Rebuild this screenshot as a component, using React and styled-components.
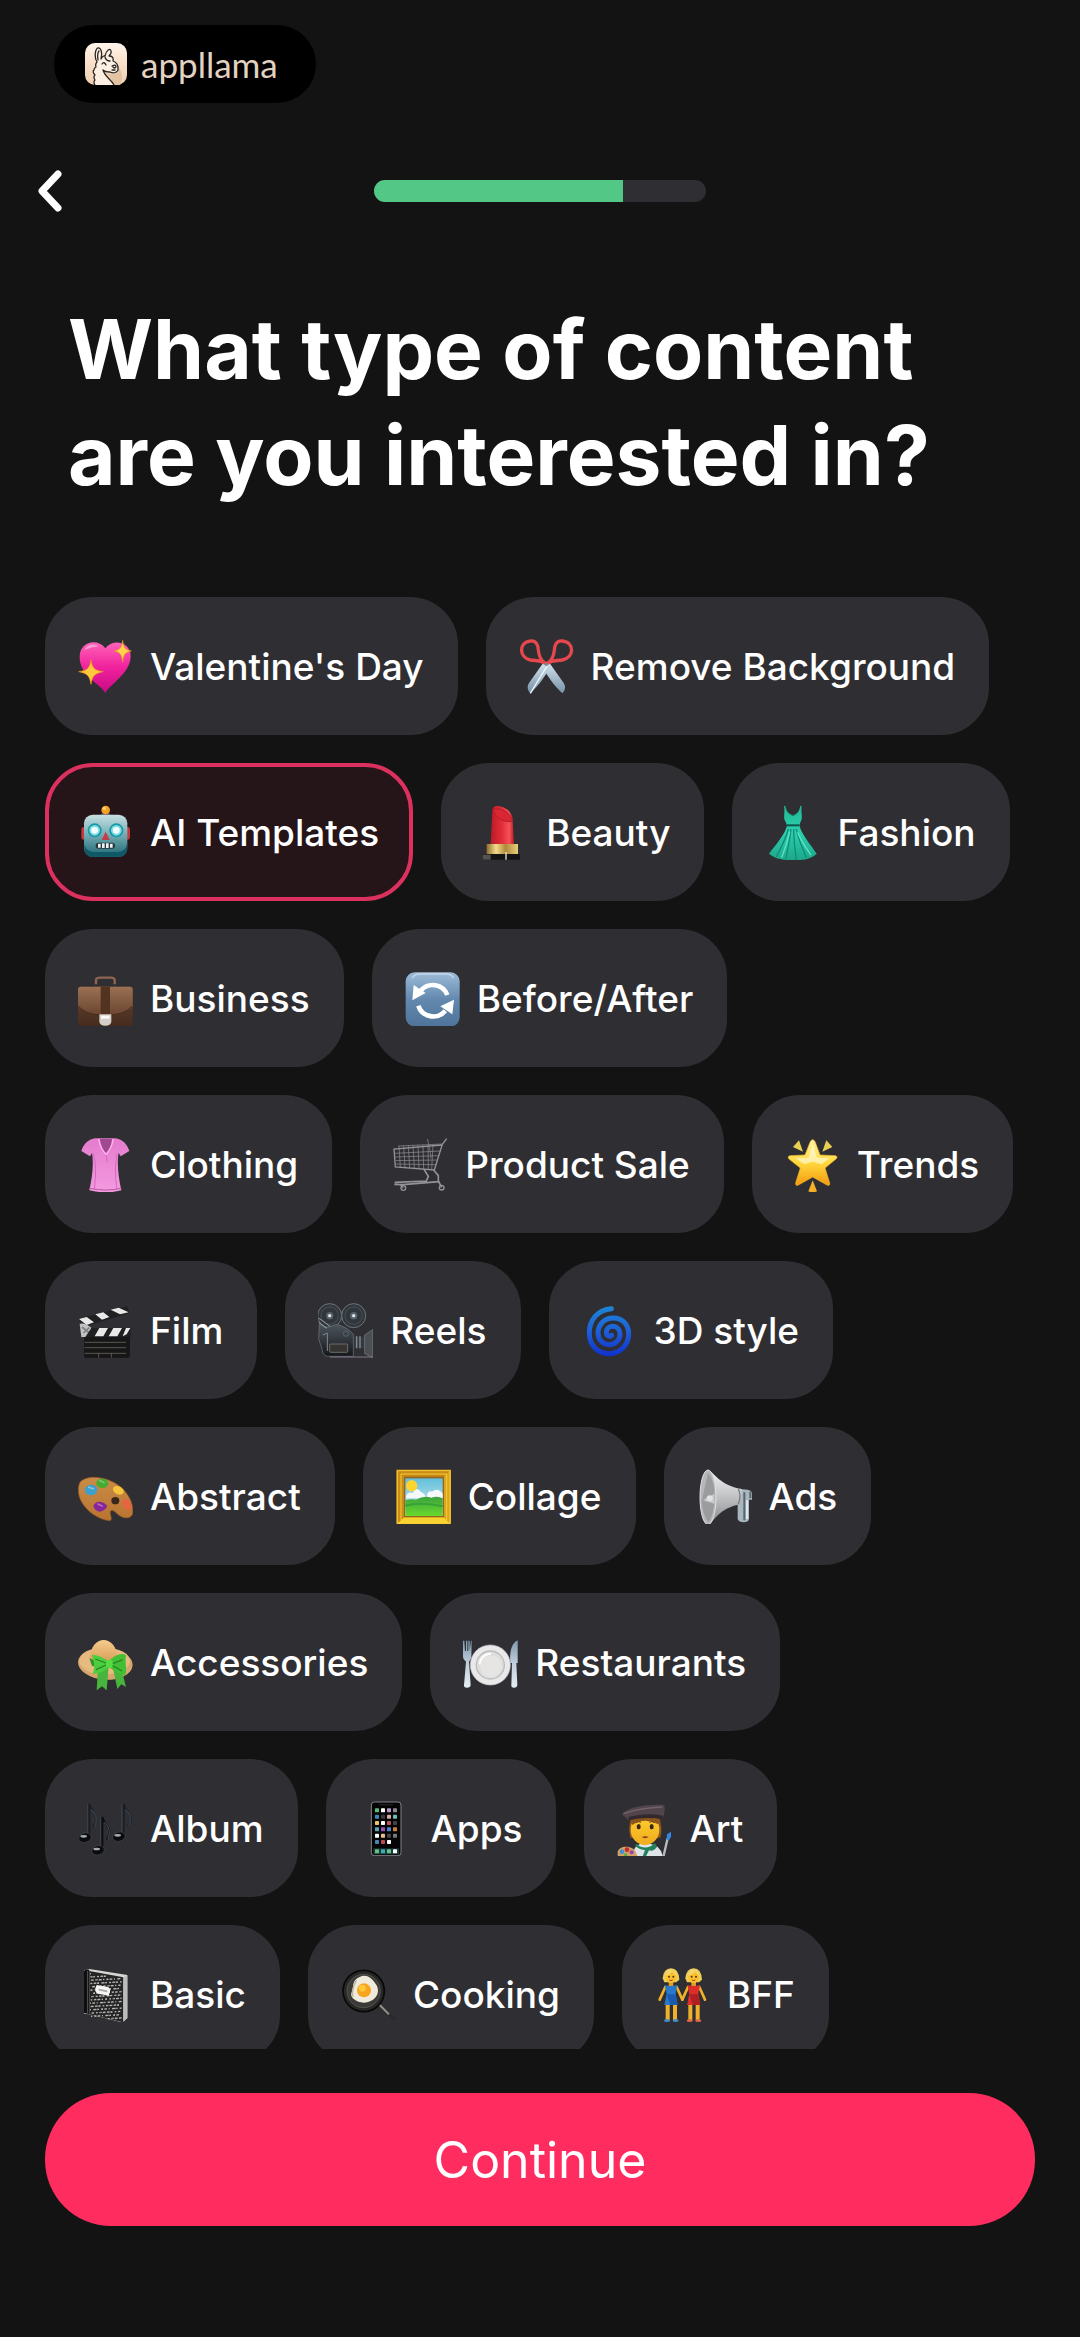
import React, { useState } from 'react';
import styled, { createGlobalStyle } from 'styled-components';

const GlobalStyle = createGlobalStyle`
	body {
		margin: 0;
		background-color: #131313;
		font-family: Inter, 'Liberation Sans', sans-serif;
		color: #fff;
	}
`;

const Page = styled.div`
	height: 100vh;
	display: flex;
	flex-direction: column;
	box-sizing: border-box;
	padding-top: 25px;
`;

const Brand = styled.div`
	align-self: flex-start;
	height: 78px;
	margin-left: 54px;
	padding: 0 38px 0 31px;
	display: flex;
	align-items: center;
	gap: 14px;
	border-radius: 39px;
	background-color: #000;
	box-sizing: border-box;
`;

const BrandName = styled.span`
	font-family: Lato, sans-serif;
	font-size: 35px;
	line-height: 40px;
	color: #e3d2c1;
`;

const NavBar = styled.nav`
	display: grid;
	grid-template-columns: 1fr 332px 1fr;
	align-items: center;
	height: 64px;
	margin-top: 56px;
	padding: 0 27px;
`;

const BackButton = styled.button`
	display: flex;
	justify-self: start;
	padding: 0;
	border: none;
	background: none;
	color: #fff;
`;

const Track = styled.div`
	height: 22px;
	border-radius: 11px;
	background-color: #2f2e33;
	overflow: hidden;
`;

const Fill = styled.div`
	height: 100%;
	background-color: #52c786;
`;

const Title = styled.h1`
	margin: 74px 68px 88px;
	font-size: 82px;
	line-height: 106px;
	font-weight: 700;
`;

const ChipList = styled.div`
	flex: 1;
	min-height: 0;
	display: flex;
	flex-wrap: wrap;
	align-content: flex-start;
	gap: 28px;
	padding: 0 50px 0 45px;
	overflow: hidden;
`;

const Chip = styled.button`
	height: 138px;
	display: flex;
	align-items: center;
	gap: 17px;
	padding: 0 30px 0 29px;
	border: 4px solid ${({ $active }) => ($active ? '#dc315f' : '#2f2e33')};
	border-radius: 48px;
	background-color: ${({ $active }) => ($active ? '#251418' : '#2f2e33')};
	color: #fff;
	font-family: inherit;
	font-size: 37px;
	font-weight: 500;
	white-space: nowrap;
	box-sizing: border-box;
`;

const Emoji = styled.svg`
	width: 55px;
	height: 55px;
	flex-shrink: 0;
`;

const Footer = styled.footer`
	padding: 44px 45px 111px;
`;

const ContinueButton = styled.button`
	display: block;
	width: 100%;
	height: 133px;
	border: none;
	border-radius: 66px;
	background-color: #ff2d5f;
	color: #fff;
	font-family: inherit;
	font-size: 50px;
	font-weight: 400;
`;

const Gradient = ({ id, from, to, mid }) => (
	<linearGradient id={id} x1="0" y1="0" x2="0" y2="1">
		<stop offset="0" stopColor={from} />
		{mid && <stop offset="0.5" stopColor={mid} />}
		<stop offset="1" stopColor={to} />
	</linearGradient>
);

const appColors = [
	['#5cb878', '#fff', '#b79ac9', '#8a8a90'],
	['#3f88b5', '#3c3c40', '#d9a9a9', '#6cc0b8'],
	['#e8c766', '#fff', '#b8505e', '#3f3f44'],
	['#57a5b5', '#9a4fb0', '#4684cf', '#d07a3c'],
	['#fff', '#e8c08a', '#44444a', '#77777c'],
	['#4684b8', '#b84c50', '#fff'],
];

const speckles = Array.from({ length: 190 }, (_, i) => ({
	x: 36 + ((i * 37) % 92),
	y: 18 + ((i * 61) % 128),
	w: 3 + ((i * 7) % 4),
}));

const art = {
	heart: (
		<>
			<defs>
				<Gradient id="heart" from="#ff63b8" mid="#f0219c" to="#c90a86" />
			</defs>
			<path
				d="M82 162C70 136 5 112 5 54C5 8 58-4 82 28C104-2 158 8 158 52C158 102 96 136 82 162Z"
				fill="url(#heart)"
			/>
			<path d="M18 34C26 16 48 12 62 22C48 24 30 28 18 34Z" fill="#ffb3df" opacity=".7" />
			<path
				d="M39 62C43 88 50 94 76 98C50 103 43 110 39 136C35 110 28 103 2 98C28 94 35 88 39 62Z"
				fill="#ffc83a"
				stroke="#e89420"
				strokeWidth="2"
			/>
			<path
				d="M134 4C137 27 141 32 160 36C141 40 137 46 134 70C131 46 127 40 108 36C127 32 131 27 134 4Z"
				fill="#ffd24a"
				stroke="#e89420"
				strokeWidth="2"
			/>
		</>
	),
	scissors: (
		<>
			<defs>
				<Gradient id="blade" from="#d5e4f0" mid="#a6bccd" to="#7790a5" />
			</defs>
			<path d="M74 70L94 84C80 108 60 140 34 163C24 152 24 142 30 132Z" fill="url(#blade)" />
			<path d="M90 70L70 84C84 108 104 140 130 163C140 152 140 142 134 132Z" fill="url(#blade)" />
			<path d="M84 82C68 106 50 138 34 163" fill="none" stroke="#eef6fb" strokeWidth="4" />
			<g fill="none" stroke="#e5484d" strokeWidth="10" strokeLinejoin="round">
				<path d="M34 6C52 4 58 20 58 34C60 50 64 64 78 72C62 62 50 66 34 63C0 56-2 10 34 6Z" />
				<path d="M130 6C112 4 106 20 106 34C104 50 100 64 86 72C102 62 114 66 130 63C166 56 168 10 130 6Z" />
			</g>
			<circle cx="82" cy="76" r="5" fill="#788a99" />
		</>
	),
	robot: (
		<>
			<defs>
				<Gradient id="robot" from="#c8e0e3" mid="#6fa9b0" to="#1d6672" />
			</defs>
			<rect x="10" y="66" width="20" height="38" rx="8" fill="#c23b3c" />
			<rect x="136" y="66" width="20" height="38" rx="8" fill="#c23b3c" />
			<path d="M68 34Q68 22 82 22Q98 22 98 34Z" fill="#5e4858" />
			<circle cx="83" cy="15" r="13" fill="#f3a127" />
			<circle cx="79" cy="10" r="5" fill="#ffd46f" />
			<rect x="18" y="29" width="130" height="127" rx="26" fill="url(#robot)" />
			<path d="M20 118V134Q22 154 44 155H122Q144 154 147 134V118Q143 141 118 141H48Q24 141 20 118Z" fill="#0f5866" />
			{[50, 115].map((x) => (
				<g key={x}>
					<circle cx={x} cy="76" r="21" fill="#1697a8" />
					<circle cx={x} cy="76" r="16" fill="#82dfe4" />
					<circle cx={x} cy="76" r="10" fill="#f4ffff" />
				</g>
			))}
			<path d="M83 80L95 105H71Z" fill="#c33e47" />
			<rect x="53" y="113" width="58" height="18" rx="9" fill="#26363d" />
			<path d="M64 116V128M76 115V129M88 115V129M100 116V128" stroke="#eef2f0" strokeWidth="8" />
		</>
	),
	lipstick: (
		<>
			<defs>
				<linearGradient id="gold" x1="0" x2="1">
					<stop offset="0" stopColor="#8d6e2c" />
					<stop offset=".3" stopColor="#f2dc8c" />
					<stop offset=".6" stopColor="#b08a3a" />
					<stop offset="1" stopColor="#e8cf7a" />
				</linearGradient>
				<linearGradient id="stick" x1="0" x2="1">
					<stop offset="0" stopColor="#b91a26" />
					<stop offset=".5" stopColor="#e42f3b" />
					<stop offset=".8" stopColor="#f4525a" />
					<stop offset="1" stopColor="#ba1b26" />
				</linearGradient>
			</defs>
			<path d="M50 118L55 18C56 4 66 2 76 4C98 8 114 22 116 42L120 118Z" fill="url(#stick)" />
			<path d="M58 14C70 4 112 20 115 48C100 56 60 40 58 14Z" fill="#d92633" stroke="#b91c29" strokeWidth="3" />
			<path d="M38 117H132V148H38Z" fill="url(#gold)" />
			<path d="M26 147H138V164H26Z" fill="#141414" />
			<path d="M26 149H50V164H26Z" fill="#55524f" />
			<path d="M96 141V164" stroke="#e9e5df" strokeWidth="4" />
		</>
	),
	dress: (
		<>
			<defs>
				<Gradient id="dress" from="#22b795" mid="#2bcfae" to="#1ba789" />
			</defs>
			<path
				d="M61 2C62 16 70 28 84 30C98 28 104 16 106 2L110 4C108 22 112 30 110 42C108 50 104 54 104 62C108 86 138 120 155 146C136 164 108 166 84 166C58 166 30 162 12 146C30 122 60 88 66 62C64 52 60 50 58 42C56 30 60 20 57 4Z"
				fill="url(#dress)"
			/>
			<path d="M61 2C62 18 72 26 84 34C96 26 104 18 106 2L100 20Q84 40 68 20Z" fill="#13806c" />
			<path d="M65 61H104" stroke="#0b5549" strokeWidth="6" />
			<path
				d="M70 72C62 104 46 130 34 156M78 72C74 106 68 136 62 163M86 72C86 108 90 136 94 165M94 72C100 104 114 132 124 158"
				fill="none"
				stroke="#128c74"
				strokeWidth="4"
			/>
			<path d="M74 80C66 118 58 136 50 158M98 82C106 106 124 130 138 150" fill="none" stroke="#5ce4c6" strokeWidth="4" />
		</>
	),
	briefcase: (
		<>
			<defs>
				<Gradient id="caseTop" from="#9b7154" to="#6a4531" />
				<Gradient id="caseBody" from="#6c4630" to="#452b1e" />
			</defs>
			<path d="M54 40V26Q56 20 66 20H98Q108 20 110 26V40" fill="none" stroke="#8f6552" strokeWidth="7" />
			<rect x="0" y="47" width="164" height="120" rx="8" fill="url(#caseBody)" />
			<path d="M0 56Q0 47 8 47H156Q164 47 164 56V106Q150 126 112 132H52Q14 126 0 106Z" fill="url(#caseTop)" />
			<path d="M2 106Q18 126 54 131H110Q146 126 162 106" fill="none" stroke="#422719" strokeWidth="3" />
			<path d="M68 47H96V130H68Z" fill="#52331f" />
			<path d="M64 130H100V152Q98 164 82 164Q66 164 64 152Z" fill="#d4cfc9" />
			<path d="M69 134H95V143H69Z" fill="#fbf9f7" />
		</>
	),
	refresh: (
		<>
			<defs>
				<Gradient id="refresh" from="#9dbcd8" mid="#6389ae" to="#4e749a" />
			</defs>
			<rect x="2" y="4" width="162" height="162" rx="27" fill="url(#refresh)" />
			<path d="M22 22Q28 9 42 9H124Q140 9 146 22" fill="none" stroke="#c5d9e9" strokeWidth="4" />
			<path d="M48 58A47 47 0 0 1 127 72" fill="none" stroke="#fff" strokeWidth="14" />
			<path d="M121 119A47 47 0 0 1 40 104" fill="none" stroke="#fff" strokeWidth="14" />
			<path d="M26 42L62 66L22 88Z" fill="#fff" />
			<path d="M147 86L106 106L142 130Z" fill="#fff" />
		</>
	),
	shirt: (
		<>
			<defs>
				<Gradient id="shirt" from="#e57bcd" to="#f49ae0" />
			</defs>
			<path
				d="M50 4H114C134 8 146 20 154 42L128 58L122 48C116 80 122 124 130 160Q84 172 34 160C42 124 48 82 42 48L36 58L10 42C18 20 30 8 50 4Z"
				fill="url(#shirt)"
			/>
			<path d="M66 6H102Q100 30 84 50Q68 30 66 6Z" fill="#a04890" />
			<path d="M62 6C66 28 72 40 84 52C96 40 102 28 106 6" fill="none" stroke="#ffb6ee" strokeWidth="4" />
			<path d="M84 54L88 76M46 50C58 90 50 130 50 156M118 50C108 94 114 130 116 156" fill="none" stroke="#d46abb" strokeWidth="3" />
			<path d="M34 154Q84 164 130 154" fill="none" stroke="#b65a9f" strokeWidth="3" />
		</>
	),
	cart: (
		<g fill="none" stroke="#929397" strokeWidth="3">
			<path d="M161 5L148 22L124 99L7 90L3 36L146 24" strokeWidth="4" />
			<path d="M6 49L142 42M7 60L138 56M8 71L134 69M8 81L130 83" strokeWidth="2" />
			<path
				d="M15 27L148 21M18 28L22 91M32 26L36 92M46 25L50 94M60 24L64 95M75 24L78 96M90 24L92 97M105 24L106 98M120 23L116 98"
				strokeWidth="2"
			/>
			<path d="M103 6L110 34L114 64" strokeWidth="2" />
			<path d="M122 99L136 116V134L30 143L4 142M93 97L106 118L100 132L5 136" strokeWidth="5" />
			<circle cx="31" cy="153" r="7" strokeWidth="4" />
			<circle cx="146" cy="152" r="7" strokeWidth="4" />
			<path d="M22 142L30 152M136 132L146 151" strokeWidth="5" />
		</g>
	),
	star: (
		<>
			<defs>
				<Gradient id="star" from="#fff3a5" mid="#ffd93d" to="#f49a10" />
			</defs>
			<path
				d="M83 8Q88 8 91 16L105 54L151 56Q160 58 153 66L120 93L134 138Q135 148 126 144L83 120L40 144Q31 148 32 138L46 93L12 66Q6 58 15 56L60 54L75 16Q78 8 83 8Z"
				fill="url(#star)"
				stroke="#f7ba28"
				strokeWidth="2"
			/>
			<path d="M83 22L96 62L134 64L110 82L83 74L58 82L32 64L70 62Z" fill="#fffbdc" opacity=".65" />
			<path d="M42 10L54 44L24 30Z" fill="#e8cf54" />
			<path d="M124 10L112 44L142 30Z" fill="#e8cf54" />
			<path d="M83 130L96 163Q83 168 70 163Z" fill="#f6b128" />
		</>
	),
	clapper: (
		<>
			<path d="M3 47L148 10L154 30L10 74Z" fill="#202022" />
			<path
				d="M3 48L26 42L48 58L26 66ZM52 34L76 28L94 42L72 50ZM98 20L122 14L152 28L126 34Z"
				fill="#e8e8e8"
			/>
			<path d="M5 62Q22 58 40 74V102H10Z" fill="#bfc1c2" />
			<path d="M12 72L34 90M16 90L34 74" stroke="#808386" strokeWidth="5" />
			<path d="M40 75H158V102H22Z" fill="#202022" />
			<path d="M64 75H90L76 100H50ZM106 75H132L118 100H92ZM144 75H157L146 94L134 100Z" fill="#e8e8e8" />
			<path d="M18 102H156V156Q154 168 142 168H30Q18 168 18 156Z" fill="#171717" />
			<path d="M20 118H144M20 134H144M20 151H144M62 151V164M100 151V164" stroke="#7c7770" strokeWidth="2" />
		</>
	),
	camera: (
		<>
			<defs>
				<Gradient id="camera" from="#4d565e" to="#15181b" />
			</defs>
			{[35, 107].map((x) => (
				<g key={x}>
					<circle cx={x} cy="38" r="36" fill="#30363b" stroke="#6e777e" strokeWidth="3" />
					<circle cx={x} cy="38" r="26" fill="none" stroke="#414a51" strokeWidth="4" />
					<circle cx={x} cy="38" r="11" fill="#59636b" />
					<circle cx={x} cy="38" r="5" fill="#dfe5e8" />
				</g>
			))}
			<path
				d="M4 62L24 74L56 64Q88 72 106 94V160H28Q14 158 12 138L2 108Z"
				fill="url(#camera)"
				stroke="#707980"
				strokeWidth="2"
			/>
			<path d="M3 46L36 70M2 58L26 76" stroke="#95a0a6" strokeWidth="3" />
			<path d="M14 96L28 90V144" fill="none" stroke="#7f8a92" strokeWidth="3" />
			<rect x="35" y="123" width="54" height="25" rx="3" fill="#353433" stroke="#928a82" strokeWidth="2" />
			<circle cx="84" cy="92" r="8" fill="none" stroke="#59636b" strokeWidth="3" />
			<path d="M108 100H140V136H108Z" fill="#343a3f" />
			<path d="M116 100V136M126 100V136" stroke="#838b92" strokeWidth="4" />
			<path d="M140 96L164 80V164L140 152Z" fill="#494f53" stroke="#7c8186" strokeWidth="2" />
			<path d="M36 162H164" stroke="#81798b" strokeWidth="3" />
		</>
	),
	cyclone: (
		<>
			<defs>
				<linearGradient id="cyclone" gradientUnits="userSpaceOnUse" x1="80" y1="10" x2="80" y2="160">
					<stop offset="0" stopColor="#1d86d6" />
					<stop offset=".5" stopColor="#1d5fd8" />
					<stop offset="1" stopColor="#1131cc" />
				</linearGradient>
			</defs>
			<path
				d="M88 17C48 20 22 50 22 90C22 130 50 152 82 152C115 152 140 125 140 92C140 64 120 45 94 45C66 45 48 66 48 90C48 110 62 125 82 125C101 125 114 110 114 94C114 79 104 70 92 70C80 70 73 79 73 88C73 98 82 103 89 97"
				fill="none"
				stroke="url(#cyclone)"
				strokeWidth="15"
				strokeLinecap="round"
			/>
		</>
	),
	palette: (
		<>
			<defs>
				<Gradient id="palette" from="#c98c46" to="#b97430" />
			</defs>
			<path
				d="M6 40C28 14 92 24 128 54C154 76 168 108 164 134C160 148 142 150 128 142C116 136 108 120 98 126C92 132 108 154 94 155C64 152 26 130 8 94C0 76-2 56 6 40Z"
				fill="url(#palette)"
				stroke="#93561f"
				strokeWidth="2"
			/>
			<ellipse cx="39" cy="63" rx="19" ry="16" fill="#3f9fcb" />
			<ellipse cx="73" cy="43" rx="18" ry="14" fill="#46ab32" />
			<ellipse cx="121" cy="64" rx="17" ry="12" transform="rotate(24 121 64)" fill="#f4c53a" />
			<ellipse cx="147" cy="107" rx="12" ry="18" transform="rotate(-30 147 107)" fill="#e56442" />
			<path d="M46 112Q50 98 64 98Q82 100 88 112Q80 126 66 128Q50 126 46 112Z" fill="#87259b" />
			<path d="M30 54L48 60M64 34L80 42M58 104L74 112" stroke="#fff" strokeWidth="4" opacity=".4" />
			<ellipse cx="112" cy="95" rx="12" ry="11" fill="#39271c" />
		</>
	),
	frame: (
		<>
			<defs>
				<Gradient id="sky" from="#62bfdc" to="#dcf0ee" />
				<Gradient id="grass" from="#3ba23f" to="#69d92c" />
			</defs>
			<rect x="1" y="2" width="164" height="164" fill="#c98c16" />
			<path d="M1 166L27 143H142L165 166Z" fill="#f8d42c" />
			<path d="M165 2V166L142 143V25Z" fill="#dda51f" />
			<path d="M4 5H162V163H4ZM15 15H152V153H15Z" fill="none" stroke="#f6cc3b" strokeWidth="3" />
			<rect x="24" y="23" width="120" height="122" fill="#94651c" />
			<rect x="28" y="28" width="112" height="113" fill="url(#sky)" />
			<path d="M30 84Q34 66 50 72Q62 50 74 68Q92 76 88 88H30ZM92 82Q96 62 108 68Q126 54 140 74V88H92Z" fill="#f7f8fa" />
			<circle cx="47" cy="50" r="17" fill="#fcd530" />
			<path d="M28 94Q48 88 60 92Q84 78 106 86Q126 80 140 88V141H28Z" fill="url(#grass)" />
			<path d="M28 110Q74 98 140 112" fill="none" stroke="#37a238" strokeWidth="6" />
		</>
	),
	megaphone: (
		<>
			<defs>
				<Gradient id="horn" from="#f4f4f4" mid="#bfc1c3" to="#86898b" />
			</defs>
			<path d="M128 60L152 62Q166 64 166 78V92H156V150Q154 160 140 160Q126 160 122 150V98H128Z" fill="#a9b6be" />
			<path d="M142 70V154M160 68V88" stroke="#59666e" strokeWidth="6" />
			<path d="M150 94V150" stroke="#dfe9ed" strokeWidth="6" />
			<path d="M34 3C54 12 66 48 134 60V106C72 114 54 152 36 167C20 150 20 20 34 3Z" fill="url(#horn)" />
			<ellipse cx="33" cy="85" rx="24" ry="82" fill="#b5b7b8" stroke="#e2e2e2" strokeWidth="3" />
			<path d="M33 12Q56 38 52 92Q50 142 34 160Q16 134 14 96Q22 62 33 12Z" fill="#9a9c9e" />
			<path d="M18 94L52 74V104Z" fill="#c9cacc" />
			<circle cx="38" cy="88" r="9" fill="#e2e2e1" />
			<path d="M124 60Q134 80 124 106" fill="none" stroke="#77797c" strokeWidth="4" />
		</>
	),
	hat: (
		<>
			<defs>
				<Gradient id="hat" from="#f5cc8d" to="#d89c58" />
			</defs>
			<ellipse cx="82" cy="86" rx="82" ry="48" transform="rotate(4 82 86)" fill="#d8a66d" />
			<ellipse cx="80" cy="78" rx="76" ry="40" fill="#e7bb80" />
			<path d="M36 72C36-4 118-4 118 72Q76 92 36 72Z" fill="url(#hat)" />
			<path d="M34 70Q76 92 120 66L128 86Q82 108 42 92Z" fill="#32902c" />
			<path d="M60 96L92 92L86 166L72 154L56 166ZM104 94L128 92L144 156L130 148L118 162Z" fill="#46b43d" />
			<path d="M92 78C74 66 56 58 42 60C48 80 52 98 44 116C64 118 82 108 95 94Z" fill="#4cce3e" />
			<path d="M92 80C106 62 130 52 144 60C140 82 148 104 142 120C124 124 106 106 92 94Z" fill="#43bf36" />
			<path d="M52 72L84 84M54 104L84 90M104 86L134 74M104 92L132 108" stroke="#268625" strokeWidth="4" />
			<rect x="84" y="75" width="20" height="23" rx="6" fill="#56dc43" />
		</>
	),
	plate: (
		<>
			<defs>
				<Gradient id="silver" from="#7e9aae" mid="#c1d0dc" to="#e4edf4" />
			</defs>
			<path d="M0 17H4L6 48H9V17H13V48H16V17H20V48L24 17H26L25 66Q24 74 18 80L23 150Q22 158 12 158Q2 158 3 150L9 80Q0 74 0 66Z" fill="url(#silver)" />
			<path d="M164 16V84H160L163 150Q162 158 153 158Q144 158 145 150L147 84H142C140 60 142 26 164 16Z" fill="url(#silver)" />
			<circle cx="82" cy="90" r="60" fill="#e9e9ea" stroke="#c3c3c8" strokeWidth="2" />
			<circle cx="82" cy="90" r="42" fill="#dedede" stroke="#bdbcbd" strokeWidth="4" />
			<path d="M50 88A33 33 0 0 1 84 56" fill="none" stroke="#fff" strokeWidth="6" />
			<circle cx="84" cy="94" r="32" fill="#e6e5e3" />
		</>
	),
	notes: (
		<>
			<g fill="none" stroke="#1a1e24" strokeWidth="6">
				<path d="M34 110V9C38 30 58 34 54 60Q52 72 45 78" />
				<path d="M73 148V48C78 72 98 74 94 98Q92 110 86 116" stroke="#0c0d10" />
				<path d="M137 106V9C140 30 160 34 158 58Q156 68 149 76" />
			</g>
			<path d="M29 8V100M132 8V100M68 48V140" stroke="#444f5e" strokeWidth="2" />
			<path d="M38 26Q64 42 50 78M142 26Q166 44 152 76M78 64Q102 82 90 116" fill="none" stroke="#38424f" strokeWidth="4" />
			{[[21, 110], [60, 148], [123, 107]].map(([x, y]) => (
				<g key={x}>
					<ellipse cx={x} cy={y} rx="19" ry="14" transform={`rotate(-14 ${x} ${y})`} fill="#0b0c0e" stroke="#44464b" strokeWidth="2" />
					<ellipse cx={x - 4} cy={y - 4} rx="10" ry="4" fill="#a5aab2" />
				</g>
			))}
		</>
	),
	phone: (
		<>
			<rect x="37" y="3" width="89" height="161" rx="9" fill="#050506" stroke="#828287" strokeWidth="3" />
			<path d="M60 11H102" stroke="#1b1b1e" strokeWidth="5" />
			{appColors.map((row, r) =>
				row.map((fill, c) => (
					<rect key={`${r}${c}`} x={48 + c * 18} y={22 + r * 19} width="12" height="12" rx="2" fill={fill} />
				))
			)}
			<rect x="43" y="142" width="77" height="18" fill="#1c3b3b" />
			{['#65c17c', '#40a9b8', '#67c58a', '#fff'].map((fill, c) => (
				<rect key={fill} x={48 + c * 18} y="145" width="12" height="12" rx="2" fill={fill} />
			))}
		</>
	),
	artist: (
		<>
			<defs>
				<Gradient id="face" from="#ffd12f" to="#f0ab1e" />
			</defs>
			<path d="M44 46H126Q138 84 130 110H40Q32 80 44 46Z" fill="#8f561d" />
			<path d="M46 168Q46 138 70 128H98Q132 132 138 168Z" fill="#dfe4e8" />
			<ellipse cx="84" cy="86" rx="43" ry="46" fill="url(#face)" />
			<path d="M40 56Q80 38 128 56L124 70Q84 48 46 72Z" fill="#8b551c" />
			<path d="M14 40C30 18 90 8 142 12Q146 34 136 54Q84 44 36 58Z" fill="#51444a" />
			<path d="M34 48Q84 34 138 44L136 55Q86 45 36 58Z" fill="#33292d" />
			<path d="M20 38Q70 20 136 18" fill="none" stroke="#726268" strokeWidth="4" />
			<ellipse cx="65" cy="77" rx="6" ry="8" fill="#3b2719" />
			<ellipse cx="104" cy="77" rx="6" ry="8" fill="#3b2719" />
			<path d="M57 65Q64 59 72 64M97 64Q104 59 112 65" fill="none" stroke="#70441c" strokeWidth="3" />
			<path d="M74 108Q84 115 95 108Q84 104 74 108Z" fill="#8f3524" />
			<path d="M58 128Q86 152 114 126L120 138Q110 152 96 148L86 168H76L84 148Q68 146 54 136Z" fill="#22815a" />
			<path d="M2 168V152C8 130 48 134 56 152L62 168Z" fill="#d1a264" />
			<circle cx="15" cy="152" r="7" fill="#478ed6" />
			<circle cx="30" cy="146" r="7" fill="#c72d2d" />
			<circle cx="44" cy="154" r="6" fill="#9b3eb0" />
			<circle cx="26" cy="162" r="5" fill="#4caf50" />
			<path d="M139 168L152 112" stroke="#b8bcc1" strokeWidth="7" />
			<path d="M149 116L150 100L162 92V108L156 118Z" fill="#3587de" />
		</>
	),
	notebook: (
		<>
			<path d="M18 10L34 6L148 24V154L132 166L34 142L18 140Z" fill="#d7d7d5" />
			<path d="M34 12L136 31V166L34 142Z" fill="#252525" />
			<g fill="#b4b4b2">
				{speckles.map(({ x, y, w }, i) => (
					<rect key={i} x={x} y={y + (x - 34) * 0.16} width={w} height="4" />
				))}
			</g>
			<path d="M18 12Q20 6 34 8V142L18 138Z" fill="#0e0e0f" />
			<path d="M29 12V140" stroke="#59595a" strokeWidth="3" />
			<path d="M136 31L148 26V152L136 165Z" fill="#bcbcba" />
			<path d="M56 54L90 60Q98 64 96 74L92 86L60 80Q50 76 52 64Z" fill="#f6f6f5" />
			<path d="M62 68L88 73" stroke="#aaa" strokeWidth="5" />
		</>
	),
	pan: (
		<>
			<path d="M114 114L160 156" stroke="#29292a" strokeWidth="9" strokeLinecap="round" />
			<path d="M116 114L144 142" stroke="#96938f" strokeWidth="6" />
			<circle cx="68" cy="72" r="62" fill="#272725" stroke="#080808" strokeWidth="5" />
			<circle cx="68" cy="72" r="50" fill="#3b3a36" stroke="#62605c" strokeWidth="2" />
			<path
				d="M56 30C76 20 92 34 102 48C116 64 114 86 96 98C74 112 54 108 38 96C24 84 34 74 36 62C36 46 42 36 56 30Z"
				fill="#efeadb"
			/>
			<path d="M46 40Q30 68 36 90" fill="none" stroke="#bdb299" strokeWidth="4" />
			<circle cx="69" cy="70" r="21" fill="#f7a51e" />
			<circle cx="64" cy="64" r="10" fill="#ffc83a" />
		</>
	),
	friends: (
		<>
			{[
				[48, '#2878cc', '#1b5baf', '#3c8bc9'],
				[116, '#dc2d2b', '#b01f22', '#e26348'],
			].map(([x, dress, shade, shoe]) => (
				<g key={x}>
					<path
						d={`M${x - 17} 60L${x - 34} 98M${x + 17} 60L${x + 34} 98`}
						stroke="#efb02a"
						strokeWidth="8"
						strokeLinecap="round"
					/>
					<path d={`M${x - 10} 108V162M${x + 12} 108V162`} stroke="#efb02a" strokeWidth="12" />
					<ellipse cx={x - 12} cy="161" rx="9" ry="4" fill={shoe} />
					<ellipse cx={x + 14} cy="161" rx="9" ry="4" fill={shoe} />
					<path d={`M${x - 7} 40H${x + 7}V58H${x - 7}Z`} fill="#e49d23" />
					<path d={`M${x - 25} 34Q${x - 22} 4 ${x} 4Q${x + 23} 4 ${x + 25} 38L${x + 16} 46H${x - 20}Z`} fill="#f0cc58" />
					<ellipse cx={x} cy="30" rx="16" ry="18" fill="#fbc12c" />
					<path d={`M${x - 17} 26Q${x - 4} 24 ${x + 4} 12Q${x + 10} 22 ${x + 18} 26Q${x + 10} 4 ${x - 8} 8Z`} fill="#f4d873" />
					<circle cx={x - 6} cy="29" r="3" fill="#513518" />
					<circle cx={x + 7} cy="29" r="3" fill="#513518" />
					<path d={`M${x - 5} 39Q${x} 43 ${x + 5} 39`} fill="none" stroke="#a83a20" strokeWidth="3" />
					<path d={`M${x - 19} 54Q${x} 60 ${x + 19} 54L${x + 14} 80L${x + 20} 114H${x - 20}L${x - 13} 80Z`} fill={dress} />
					<path d={`M${x - 13} 82H${x + 13}L${x + 20} 114H${x - 2}Z`} fill={shade} />
				</g>
			))}
		</>
	),
};

const topics = [
	['heart', "Valentine's Day"],
	['scissors', 'Remove Background'],
	['robot', 'AI Templates'],
	['lipstick', 'Beauty'],
	['dress', 'Fashion'],
	['briefcase', 'Business'],
	['refresh', 'Before/After'],
	['shirt', 'Clothing'],
	['cart', 'Product Sale'],
	['star', 'Trends'],
	['clapper', 'Film'],
	['camera', 'Reels'],
	['cyclone', '3D style'],
	['palette', 'Abstract'],
	['frame', 'Collage'],
	['megaphone', 'Ads'],
	['hat', 'Accessories'],
	['plate', 'Restaurants'],
	['notes', 'Album'],
	['phone', 'Apps'],
	['artist', 'Art'],
	['notebook', 'Basic'],
	['pan', 'Cooking'],
	['friends', 'BFF'],
];

const LlamaIcon = () => (
	<svg width="42" height="42" viewBox="0 0 42 42" aria-hidden="true">
		<defs>
			<Gradient id="tile" from="#fff5eb" mid="#f9dfc8" to="#efcfb1" />
		</defs>
		<rect width="42" height="42" rx="10" fill="url(#tile)" />
		<path d="M28 42C27 36 24 33 22 30C30 34 35 29 33 23C38 30 38 38 35 42Z" fill="#e2c3a2" />
		<g stroke="#292522" strokeWidth="1.3" strokeLinecap="round" strokeLinejoin="round">
			<path
				d="M10 42Q8 39 10 37Q8 34 10 32Q7 29 9 27Q9 25 11 24Q10 21 12 19C9 14 10 4 14 5C17 6 17 12 16 16Q18 12 20 13C21 8 25 4 26 8C27 11 24 12 24 13Q29 13 28 18Q33 20 33 25C34 29 29 31 25 29Q20 29 18 27C20 34 26 36 29 42"
				fill="#fdf0e2"
			/>
			<path d="M13 17Q12 10 14 8M20 14Q21 18 25 18M17 21Q19 18 21 22M27 23Q31 21 31 24Q30 26 28 24M27 27H30" fill="none" />
		</g>
	</svg>
);

export default function App() {
	const [selected, setSelected] = useState(['AI Templates']);

	const toggle = (label) =>
		setSelected((current) =>
			current.includes(label) ? current.filter((item) => item !== label) : [...current, label]
		);

	return (
		<Page>
			<GlobalStyle />
			<Brand>
				<LlamaIcon />
				<BrandName>appllama</BrandName>
			</Brand>
			<NavBar>
				<BackButton type="button" aria-label="Back">
					<svg width="46" height="46" viewBox="0 0 46 46" aria-hidden="true">
						<path
							d="M31 6L15 23L31 40"
							fill="none"
							stroke="currentColor"
							strokeWidth="7"
							strokeLinecap="round"
							strokeLinejoin="round"
						/>
					</svg>
				</BackButton>
				<Track role="progressbar" aria-label="Progress" aria-valuenow={75} aria-valuemin={0} aria-valuemax={100}>
					<Fill style={{ width: '75%' }} />
				</Track>
			</NavBar>
			<Title>What type of content are you interested in?</Title>
			<ChipList>
				{topics.map(([icon, label]) => {
					const active = selected.includes(label);
					return (
						<Chip key={label} type="button" $active={active} aria-pressed={active} onClick={() => toggle(label)}>
							<Emoji viewBox="0 0 165 165" aria-hidden="true">
								{art[icon]}
							</Emoji>
							{label}
						</Chip>
					);
				})}
			</ChipList>
			<Footer>
				<ContinueButton type="button">Continue</ContinueButton>
			</Footer>
		</Page>
	);
}
